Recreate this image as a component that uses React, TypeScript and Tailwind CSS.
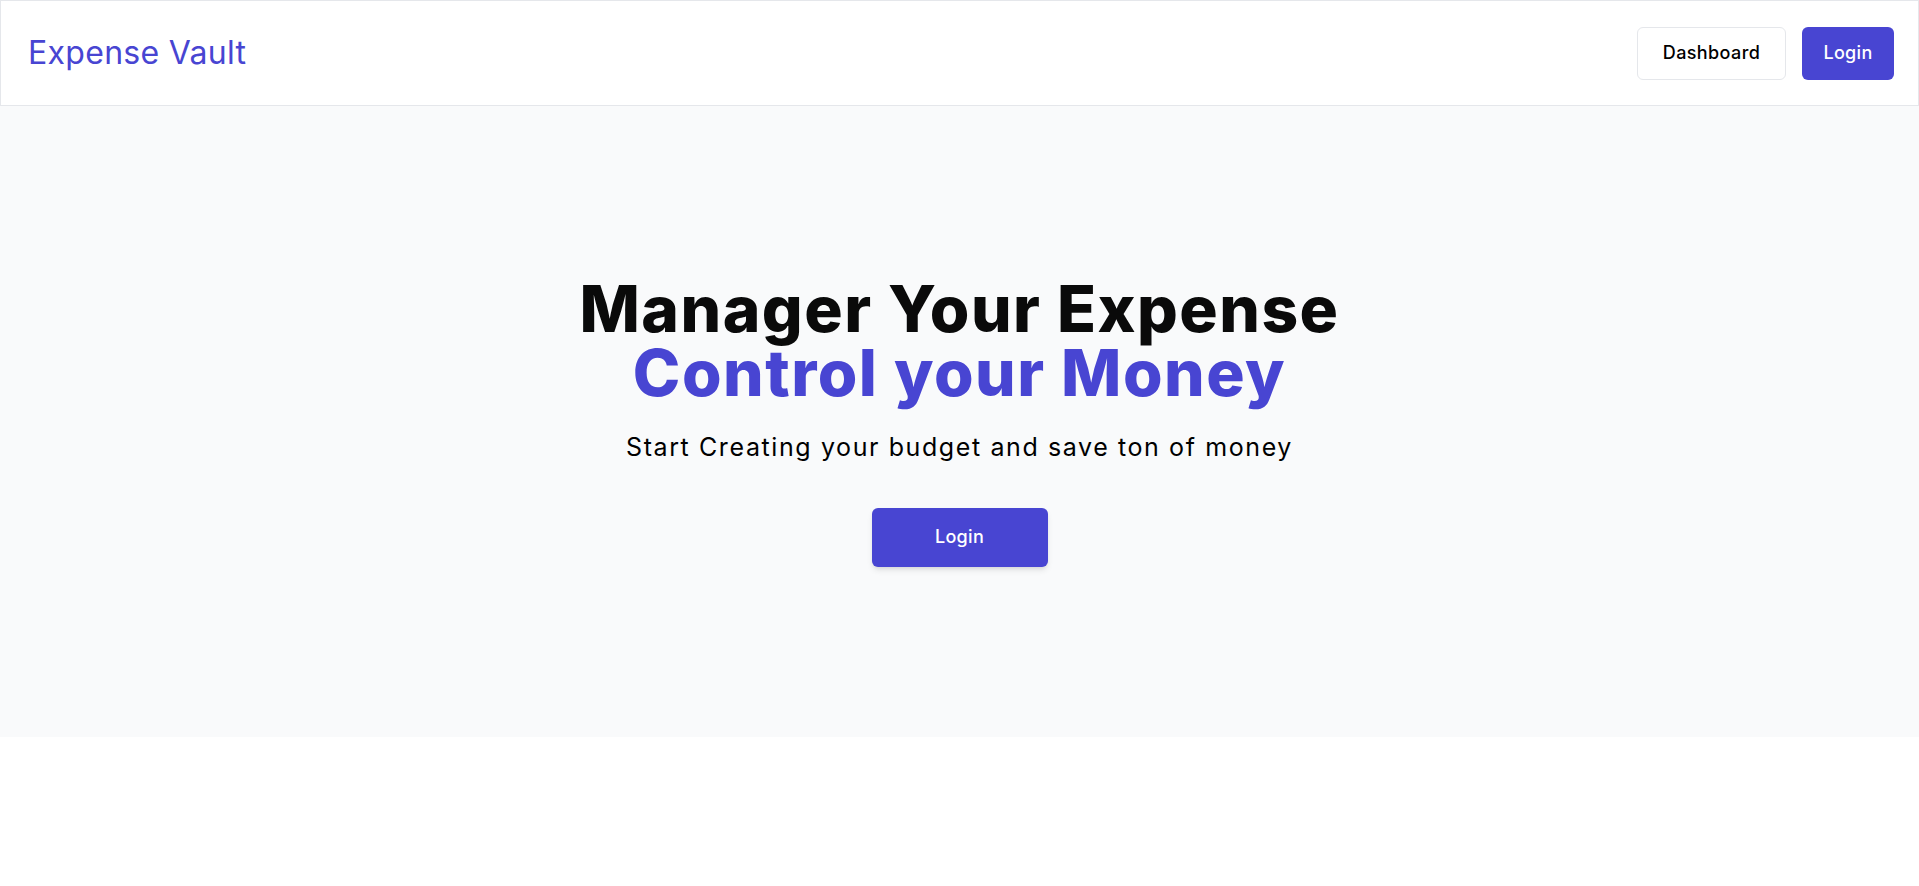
const font = { fontFamily: "Inter, 'Noto Sans', sans-serif" };

function Header() {
  return (
    <header className="flex h-[106px] items-center justify-between border border-gray-200 bg-white pl-[27px] pr-6">
      <a href="#" className="text-[32px] font-normal tracking-[0.3px] text-[#4845d2]">
        Expense Vault
      </a>
      <nav className="flex items-center gap-4">
        <button className="flex h-[53px] w-[149px] items-center justify-center rounded-md border border-gray-200 bg-white text-lg font-medium tracking-[0.4px] text-black">
          Dashboard
        </button>
        <button className="flex h-[53px] w-[92px] items-center justify-center rounded-md bg-[#4845d2] text-lg font-medium tracking-[0.3px] text-white">
          Login
        </button>
      </nav>
    </header>
  );
}

function Hero() {
  return (
    <section className="flex h-[631px] flex-col items-center justify-center bg-gray-50 text-center">
      <h1 className="text-[64px] font-extrabold leading-[64px] tracking-[1.5px] text-[#0a0a0a]">
        Manager Your Expense
        <br />
        <span className="text-[#4845d2]">Control your Money</span>
      </h1>
      <p className="mt-[26px] text-[25px] leading-8 tracking-[1.6px] text-black">
        Start Creating your budget and save ton of money
      </p>
      <button className="mt-[45px] h-[59px] w-[176px] rounded-md bg-[#4845d2] text-lg font-medium tracking-[0.3px] text-white shadow-md">
        Login
      </button>
    </section>
  );
}

export default function App() {
  return (
    <div className="min-h-screen bg-white" style={font}>
      <Header />
      <Hero />
    </div>
  );
}
